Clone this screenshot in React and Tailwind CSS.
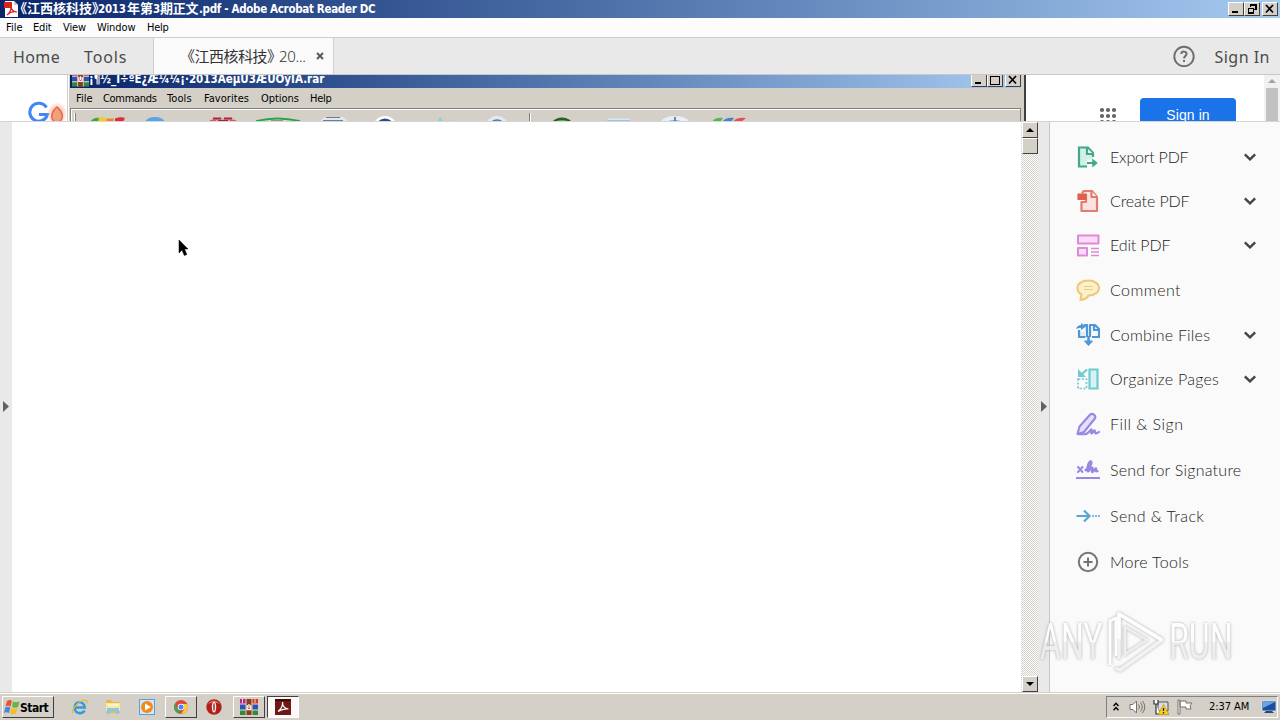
import React from "react";

const ui = "font-['DejaVu_Sans_Condensed','DejaVu_Sans','Noto_Sans_CJK_SC',sans-serif]";
const raised = "bg-[#d4d0c8] border border-t-white border-l-white border-r-[#404040] border-b-[#404040]";

function CaptionButton({ kind }) {
  return (
    <div className={`flex h-[14px] w-4 shrink-0 items-center justify-center ${raised}`}>
      <svg className="h-[10px] w-3" viewBox="0 0 12 10" fill="none" stroke="#000" shapeRendering="crispEdges">
        {kind === "min" && <path d="M2 8h6" strokeWidth="2" />}
        {kind === "max" && <path d="M1.500 1v8h9V1zM1 1.500h10" strokeWidth="1" />}
        {kind === "restore" && <path d="M4.500 3V.5h5.500v5H8M4 1h6M2 4.500h6M2.500 4v5h5V4" strokeWidth="1.400" />}
        {kind === "close" && <path d="M2 1l7 7.500M9 1L2 8.500" strokeWidth="1.700" shapeRendering="auto" />}
      </svg>
    </div>
  );
}

function BooksIcon({ className }) {
  return (
    <svg className={className} viewBox="0 0 18 16">
      <path fill="#b3268c" d="M0 0h6v5H0z" />
      <path fill="#d42b22" d="M6 0h6v5H6z" />
      <path fill="#d8342b" d="M12 0h6v5h-6z" />
      <path fill="#2b52b4" d="M0 5h18v6H0z" />
      <path fill="#2e8a3d" d="M0 11h18v5H0z" />
      <path fill="#e9dcc4" d="M0 4.600h18v1H0zM0 10.400h18v1H0zM2 0h1v4H2zM14.500 0h1v4h-1z" />
      <path fill="#8d3a21" d="M6 0h6v16H6z" />
      <path fill="#e8c7b0" d="M5.500 0h1v16h-1zM11.500 0h1v16h-1z" />
      <path stroke="#fff" strokeWidth="1.300" fill="none" d="M7.200 6v4.500h3.600V6M9 5v4" />
    </svg>
  );
}

function TitleBar() {
  return (
    <div className="flex h-[18px] shrink-0 items-center bg-linear-to-r from-[#0a246a] to-[#a6caf0] pr-[2px]">
      <svg className="ml-1 h-4 w-[14px] shrink-0" viewBox="0 0 14 16">
        <path fill="#fff" d="M1 0h9l4 4v12H1z" />
        <path fill="#c9c9c9" d="M10 0v4h4z" />
        <path fill="#d8251d" d="M0 1h8v6H0z" />
        <path d="M3 14c3-2 4-5 4-8 1 4 3 5 6 5-4-1-7 0-10 3z" fill="none" stroke="#d8251d" strokeWidth="1.200" />
      </svg>
      <div className={`flex h-[18px] items-center whitespace-pre font-bold leading-[18px] text-white ${ui}`}>
        <span className="-ml-[4px] w-[84px] text-[13px]">《江西核科技》</span>
        <span className="w-[29px] text-[11.500px] tracking-[-0.300px]">2013</span>
        <span className="w-[26px] text-[13px]">年第</span>
        <span className="w-[7px] text-[11.500px]">3</span>
        <span className="w-[38px] text-[13px] tracking-[-0.300px]">期正文</span>
        <span className="ml-[1px] text-[11.500px] tracking-[-0.320px]">.pdf - Adobe Acrobat Reader DC</span>
      </div>
      <div className="ml-auto flex">
        <CaptionButton kind="min" />
        <CaptionButton kind="restore" />
        <div className="w-[2px]" />
        <CaptionButton kind="close" />
      </div>
    </div>
  );
}

function MenuBar() {
  return (
    <div className={`flex h-5 shrink-0 items-center border-b border-[#cfcfcf] bg-[#fcfcfd] pt-[2px] text-[11px] text-black ${ui}`}>
      <span className="ml-[6px] w-[27px]">File</span>
      <span className="w-[30px] tracking-[-0.200px]">Edit</span>
      <span className="w-[34px] tracking-[-0.100px]">View</span>
      <span className="w-[50px] tracking-[-0.100px]">Window</span>
      <span className="tracking-[-0.300px]">Help</span>
    </div>
  );
}

function TabBar() {
  return (
    <div className="flex h-[37px] shrink-0 items-center border-b border-[#c8c8c8] bg-[#e9e9e9] font-['Noto_Sans','Noto_Sans_CJK_SC',sans-serif] text-[16px] text-[#4b4b4b]">
      <span className="ml-[13px] mt-[2px] w-[71px] tracking-[0.400px]">Home</span>
      <span className="mt-[2px] w-[69px] tracking-[0.850px]">Tools</span>
      <div className="flex h-full w-[181px] items-center border-x border-[#cfcfcf] bg-[#fafafa] text-[15px] text-[#333]">
        <span className="ml-[26px] mt-[1px] w-[101px] whitespace-nowrap font-['Noto_Sans_CJK_SC',sans-serif] tracking-[-0.500px]">《江西核科技》</span>
        <span className="-ml-[2px] mt-[1px] w-[28px] whitespace-nowrap font-light tracking-[-0.300px]">20...</span>
        <svg className="ml-[9px] h-2 w-2" viewBox="0 0 8 8" stroke="#5a5a5a" strokeWidth="2"><path d="M1 1l6 6M7 1L1 7" /></svg>
      </div>
      <svg className="ml-auto h-[22px] w-[22px]" viewBox="0 0 22 22" fill="none" stroke="#6e6e6e">
        <circle cx="11" cy="11.500" r="9.700" strokeWidth="1.900" />
        <path d="M8.300 9c.3-3.400 5.600-3 5.200.2-.2 1.700-2.400 2-2.500 4.200M11 15v2" strokeWidth="2" />
      </svg>
      <span className="ml-[19px] mr-[10px] mt-[2px] whitespace-nowrap tracking-[0.500px]">Sign In</span>
    </div>
  );
}

function ArchiveToolbarIcons() {
  return (
    <svg className="h-[12px] w-[945px]" viewBox="72 110 945 12">
      <path stroke="#fff" d="M75.500 113v9" /><path stroke="#808080" d="M76.500 113v9M530.500 113v9" />
      <path stroke="#fff" d="M531.500 113v9" />
      <path fill="#3eaa31" d="M91 122c2-3 5-5 10-4l-1 4z" /><path fill="#f4c82f" d="M100 117.500q5-1 8 1l-1 3.500h-8z" /><path fill="#ef8428" d="M108 118.500h7l-1 3.500h-7z" /><path fill="#e02c32" d="M116 118.500q6-2 10-.5l-2 4h-8z" />
      <ellipse cx="156" cy="122" rx="9.500" ry="5" fill="#58a5e8" />
      <path fill="#d7a6ac" d="M209 122l5-4h20l5 4z" /><path stroke="#b91f35" strokeWidth="1.800" d="M214 118.500h8m3 0h8M211 121.500h6m14 0h6" /><path fill="#86323e" d="M219 120h10v2h-10z" />
      <path fill="#d5dccb" stroke="#23a645" strokeWidth="2" d="M258 123v-2q20-5 42 0v2" /><path fill="#913c2d" d="M272 120.500h12v1.500h-12z" />
      <path fill="#e2e8ef" d="M320 122l6-5h18l6 5z" /><path stroke="#697f96" strokeWidth="1.200" d="M327 117.500h14M324 120.500h20" />
      <circle cx="386" cy="128.500" r="12.500" fill="#fff" /><circle cx="386" cy="128" r="9.500" fill="#2b4b8f" />
      <path fill="#8cd2d5" d="M438 122l3-5 4 5z" /><path fill="#e3b9b8" d="M449 122l3-2 5 2z" />
      <circle cx="498" cy="127.500" r="11.500" fill="#e3e9f3" /><circle cx="498" cy="128" r="8" fill="#a3bfe0" stroke="#5b77a5" strokeWidth="1.500" />
      <ellipse cx="563" cy="124" rx="10" ry="6.500" fill="#275e22" /><ellipse cx="563" cy="122" rx="6" ry="2" fill="#64bb44" />
      <path fill="#9fc1e8" d="M608 120h22l3 2h-24z" /><path fill="#dbe6f2" d="M609 118.500h22v1.500h-22z" />
      <ellipse cx="676" cy="124" rx="15" ry="8" fill="#e8eef7" /><path fill="#8ca9d2" d="M667 122q8-4 18 0z" /><path stroke="#47659b" strokeWidth="1.500" d="M676 117v5" />
      <path fill="#4dbb50" d="M713 122q3-5 11-4l-3 4z" /><path fill="#4a80cf" d="M723 122q4-5 12-4l-3 4z" /><path fill="#e64e52" d="M734 122q3-5 13-4l-5 4z" />
    </svg>
  );
}

function BackgroundWindows() {
  return (
    <div className="flex h-[47px] shrink-0 overflow-hidden border-b border-[#d5d5d5] bg-white">
      <div className="h-full w-[67px] shrink-0">
        <svg className="ml-7 mt-[26px] h-[21px] w-[39px]" viewBox="0 0 39 21" fill="none">
          <defs>
            <radialGradient id="flame"><stop offset="0" stopColor="#e85c43" stopOpacity=".9" /><stop offset="1" stopColor="#ffcab5" stopOpacity=".25" /></radialGradient>
          </defs>
          <path d="M18.500 6.500A9 9 0 1 0 19.500 13.500H11" stroke="#4285f4" strokeWidth="3" />
          <ellipse cx="29" cy="13" rx="9.500" ry="11" fill="url(#flame)" />
          <path d="M29 6c-6 5-7 12-2 15h4c6-4 3-11-2-15z" fill="#f2a07d" stroke="#e4684c" strokeWidth="1.500" />
        </svg>
      </div>
      <div className="flex h-full w-[959px] shrink-0 flex-col border-l border-r-2 border-l-[#d4d0c8] border-r-[#404040] bg-[#d4d0c8] pl-[2px] pr-[3px] shadow-[inset_1px_0_0_#fff]">
        <div className="flex h-[13px] shrink-0 items-start overflow-hidden bg-linear-to-r from-[#0a246a] to-[#a6caf0]">
          <BooksIcon className="-mt-[4px] ml-[2px] h-4 w-[17px] shrink-0" />
          <span className={`-mt-[4px] whitespace-nowrap text-[11.500px] font-bold leading-[16px] text-white ${ui}`}>¡¶½_Î÷ºË¿Æ¼¼¡·2013ÄêµÚ3ÆÚÕýÎÄ.rar</span>
          <div className="-mt-[2px] ml-auto flex">
            <CaptionButton kind="min" /><CaptionButton kind="max" /><div className="w-[2px]" /><CaptionButton kind="close" />
          </div>
        </div>
        <div className={`flex h-5 shrink-0 items-center pt-[2px] text-[11px] text-black ${ui}`}>
          <span className="ml-[6px] w-[27px]">File</span><span className="w-16 tracking-[-0.300px]">Commands</span>
          <span className="w-[37px] tracking-[0.100px]">Tools</span><span className="w-[57px] tracking-[0.050px]">Favorites</span>
          <span className="w-[49px] tracking-[-0.050px]">Options</span><span className="tracking-[-0.300px]">Help</span>
        </div>
        <div className="flex h-[14px] shrink-0 border-l border-r border-t border-[#808080] shadow-[inset_1px_1px_0_#fff]">
          <div className="mt-[1px] flex"><ArchiveToolbarIcons /></div>
        </div>
      </div>
      <div className="flex min-w-0 flex-1 font-['Liberation_Sans',Arial,sans-serif]">
        <svg className="ml-[73px] mt-[32px] h-4 w-[18px] shrink-0" viewBox="0 0 18 16" fill="#5f6368">
          <circle cx="3" cy="3" r="2.100" /><circle cx="9" cy="3" r="2.100" /><circle cx="15" cy="3" r="2.100" />
          <circle cx="3" cy="9" r="2.100" /><circle cx="9" cy="9" r="2.100" /><circle cx="15" cy="9" r="2.100" />
          <circle cx="3" cy="15" r="2.100" /><circle cx="9" cy="15" r="2.100" /><circle cx="15" cy="15" r="2.100" />
        </svg>
        <div className="ml-[23px] mt-[23px] h-9 w-24 shrink-0 rounded-[4px] bg-[#1a73e8] text-center text-[14px] leading-[34px] tracking-[0.100px] text-white">Sign in</div>
        <div className="ml-auto flex w-4 flex-col items-center bg-[#f1f1f1]">
          <svg className="h-[13px] w-4 shrink-0" viewBox="0 0 16 13"><path d="M4 8l4-4 4 4z" fill="#a3a3a3" /></svg>
          <div className="h-10 w-3 shrink-0 bg-[#c1c1c1]" />
        </div>
      </div>
    </div>
  );
}

const icons = {
  export: (
    <g stroke="#3fa98b" strokeWidth="2.200" fill="#d5eee6">
      <path d="M17 12V8l-5-5.500H3v19h8" /><path d="M11 3v6h6" fill="#fafafa" />
      <path d="M11 14.500h6v6h-6z" stroke="none" fill="#fafafa" />
      <path d="M11 18h7" strokeWidth="2" /><path d="M16.500 14l5 4-5 4z" fill="#3fa98b" strokeWidth=".5" />
    </g>
  ),
  create: (
    <g stroke="#e27c6e" strokeWidth="2.200" fill="#fbe3df" strokeLinejoin="round">
      <path d="M6 4.500L7.500 2H16l5 6v14H5.500v-9H10V5" /><path d="M15.500 2v6H21" fill="#fafafa" />
      <path d="M2 5h8v5.500H2z" fill="#e0604e" stroke="#e0604e" strokeWidth="1.200" />
    </g>
  ),
  edit: (
    <g stroke="#dd8ad4" strokeWidth="2" fill="#fbdcf8" strokeLinejoin="round">
      <path d="M2 2.500h20.500v8H2zM2 15h9v7.500H2z" /><path d="M15 15.500h8M15 19h8M15 22.500h8" strokeWidth="1.300" />
    </g>
  ),
  comment: (
    <g stroke="#f0c878" strokeWidth="2.200" fill="#fdf0cd" strokeLinejoin="round">
      <path d="M12.500 2.500c6 0 10.500 3 10.500 7.500S18.500 17.500 12.500 17.500c-1.500 3-4 4-8 4.500l1-5.500C3 15 1.500 13 1.500 10c0-4.500 4.500-7.500 11-7.500z" />
      <path d="M8 8.500h9M8 11.500h9" strokeWidth="1.200" />
    </g>
  ),
  combine: (
    <g stroke="#4d97d8" strokeWidth="2.200" fill="#dcedfb" strokeLinejoin="round">
      <path d="M9.500 14H3V7M8 2h3v12" /><path d="M14 14V2h5l4 4v8h-7" fill="#fafafa" /><path d="M18 2v5h5" fill="none" />
      <path d="M0 6c1-3 3-4 5-4V0l5 3.500L5 7V5C3 5 2 5 0 6z" stroke="none" fill="#4d97d8" />
      <path d="M5 9h4v4H5z" stroke="none" /><path d="M12.500 13v6" strokeWidth="2.600" /><path d="M8.500 18h8l-4 4.500z" fill="#4d97d8" strokeWidth="1" />
    </g>
  ),
  organize: (
    <g stroke="#6fcbd0" strokeWidth="2.200" fill="#d5f3f4">
      <path d="M13.500 2.500h8v19h-8z" /><path d="M2 12h8.500v9.500H2z" strokeDasharray="2.200 1.600" fill="none" strokeWidth="1.700" />
      <path d="M11 2.500L5 8" /><path d="M2 2v8h8z" fill="#6fcbd0" stroke="none" />
    </g>
  ),
  fill: (
    <g stroke="#9a86e4" strokeWidth="2.100" fill="#e6e0fb" strokeLinejoin="round" strokeLinecap="round">
      <path d="M1.500 22l2-7.500L14 2.800c2.500-2.500 7 1 4.500 4.200L8 20l-6.500 2z" />
      <path d="M2 22.200h7c4 0 5-5 6.500-4.800 1 .3-1.500 4 .2 4 1.500 0 1.600-3.500 3-3 1 .3-.4 3 1.300 3 1.300 0 2-.7 3-1.500" fill="none" />
    </g>
  ),
  signature: (
    <g stroke="#9a86e4" fill="none" strokeWidth="2" strokeLinecap="round">
      <path d="M2 9l4.500 5M6.500 9L2 14" /><path d="M9.500 12c4-2 7-7 5.500-8.500-2-1-4.500 7-3.500 9.500 1 2 3-3.500 4.500-3.500s-1 4.500.5 4.500c1.500-.2 2.500-4 3.500-3.500-.5 2-.5 3.500 1.500 2.500" strokeWidth="2.300" /><path d="M1 20h22" strokeLinecap="square" />
    </g>
  ),
  track: (
    <g stroke="#58a6d2" fill="none" strokeWidth="2.200">
      <path d="M.5 12H13M8 6.500l5.500 5.500L8 17.500" /><path d="M16 12h8" strokeDasharray="2 1" strokeWidth="1.600" />
    </g>
  ),
  more: (
    <g stroke="#757575" fill="none" strokeWidth="2">
      <circle cx="12" cy="12" r="9.200" /><path d="M12 7.500v9M7.500 12h9" />
    </g>
  ),
};

const tools = [
  ["export", "Export PDF", true, "h-11", "tracking-[-0.200px]"],
  ["create", "Create PDF", true, "h-11", "tracking-[-0.100px]"],
  ["edit", "Edit PDF", true, "h-11", "tracking-[-0.150px]"],
  ["comment", "Comment", false, "h-[46px]", "tracking-[0.450px]"],
  ["combine", "Combine Files", true, "h-11", "tracking-[0.200px]"],
  ["organize", "Organize Pages", true, "h-11", "tracking-[0.250px]"],
  ["fill", "Fill & Sign", false, "h-[46px]", "tracking-[0.450px]"],
  ["signature", "Send for Signature", false, "h-[46px]", "tracking-[0.250px]"],
  ["track", "Send & Track", false, "h-[46px]", "tracking-[0.400px]"],
  ["more", "More Tools", false, "h-[46px]", "tracking-[0.300px]"],
];

function ToolsPanel() {
  return (
    <div className="flex-1 border-l border-[#c6c6c6] bg-[#fafafa] pt-[13px] font-[Lato,sans-serif] text-[16px] font-light text-[#222]">
      {tools.map(([icon, label, more, height, tracking]) => (
        <div key={label} className={`flex items-center pl-[26px] pr-6 ${height}`}>
          <svg className="h-6 w-6 shrink-0" viewBox="0 0 24 24">{icons[icon]}</svg>
          <span className={`ml-[10px] whitespace-nowrap ${tracking}`}>{label}</span>
          {more && (
            <svg className="ml-auto h-2 w-3 shrink-0" viewBox="0 0 12 8" fill="none" stroke="#454545" strokeWidth="2.500"><path d="M.8 1.300L6 6.300l5.200-5" /></svg>
          )}
        </div>
      ))}
    </div>
  );
}

function ScrollButton({ down }) {
  return (
    <div className={`flex h-4 w-4 shrink-0 items-center justify-center ${raised}`}>
      <svg className="h-1 w-2" viewBox="0 0 8 4"><path d={down ? "M0 0h8L4 4z" : "M0 4h8L4 0z"} /></svg>
    </div>
  );
}

function Workspace() {
  return (
    <div className="flex h-[570px] shrink-0">
      <div className="flex w-3 shrink-0 items-center bg-[#e9e9e9] pb-[2px] pl-[3px]">
        <svg className="h-[11px] w-[6px]" viewBox="0 0 6 11"><path d="M0 0l6 5.500L0 11z" fill="#616161" /></svg>
      </div>
      <div className="w-[1009px] shrink-0 bg-white" />
      <div className="flex w-[17px] shrink-0 flex-col items-end bg-[conic-gradient(#d4d0c8_25%,#fff_0_50%,#d4d0c8_0_75%,#fff_0)] bg-[length:2px_2px]">
        <ScrollButton />
        <div className={`h-4 w-4 shrink-0 ${raised}`} />
        <div className="flex-1" />
        <ScrollButton down />
      </div>
      <div className="flex w-[11px] shrink-0 items-center bg-[#e9e9e9] pb-[2px] pl-[3px]">
        <svg className="h-[11px] w-[6px]" viewBox="0 0 6 11"><path d="M0 0l6 5.500L0 11z" fill="#616161" /></svg>
      </div>
      <ToolsPanel />
    </div>
  );
}

function Taskbar() {
  return (
    <div className="flex h-7 shrink-0 items-center border-t border-[#d4d0c8] bg-[#d4d0c8] pt-[1px] shadow-[inset_0_1px_0_#fff]">
      <div className={`ml-[2px] flex h-[22px] w-[52px] shrink-0 items-center ${raised}`}>
        <svg className="ml-[1px] h-4 w-[17px] shrink-0" viewBox="0 0 17 16">
          <path fill="#e8572b" d="M3 2c2-1.500 4-1 5 0L6.500 7.500C5 6.500 3 6.500 1.500 7.500z" />
          <path fill="#69b343" d="M9 2.500c2 1 4 1 6.500 0L14 8c-2 1-4 1-6 0z" />
          <path fill="#4388d9" d="M1.300 8.500c2-1 3.500-1 5 0L5 14c-1.500-1-3.500-1-5 0z" />
          <path fill="#f5bd26" d="M7.300 9c2 1 4 1 6.200 0L12 14.500c-2 1-4 1-6 0z" />
        </svg>
        <span className={`-ml-[1px] mt-[1px] text-[12px] font-bold tracking-[-0.500px] text-black ${ui}`}>Start</span>
      </div>
      <svg className="ml-[17px] h-4 w-[17px] shrink-0" viewBox="0 0 17 16" fill="none">
        <path d="M13.500 11.500c-2 4-9.500 3.500-9.800-2.500C3.500 1.500 13 1 13.700 8.600H5" stroke="#3499dd" strokeWidth="2.500" />
        <path d="M2 14C-1 11 10-.5 15.500 1.500c1 .5.500 2 0 3" stroke="#e7b83c" strokeWidth="1.300" />
      </svg>
      <svg className="ml-[17px] h-4 w-4 shrink-0" viewBox="0 0 16 16">
        <path fill="#e4b94f" d="M1 1h5l1 2h8v11H1z" /><path fill="#fbe79e" d="M1 4h14v8H1z" />
        <path fill="#85c8e8" d="M2 9h12v6h-3v-3H5v3H2z" /><path fill="#fff7cc" d="M3 5h10v2H3z" />
      </svg>
      <svg className="ml-[18px] h-4 w-4 shrink-0" viewBox="0 0 16 16">
        <path fill="#5aa0dc" d="M0 0h16v16H0z" /><path fill="#d3e7f7" d="M1 1h14v14H1z" /><circle cx="8" cy="8" r="6" fill="#f08a1d" /><path fill="#fff" d="M6 4.500l6 3.500-6 3.500z" />
      </svg>
      <div className={`ml-[10px] flex h-[22px] w-8 shrink-0 items-center justify-center ${raised}`}>
        <svg className="h-[14px] w-[14px]" viewBox="0 0 14 14">
          <circle cx="7" cy="7" r="7" fill="#e0473a" /><path fill="#41a55a" d="M.8 3.700L5 11l2 3A7 7 0 0 1 .8 3.700z" /><path fill="#f7cb3b" d="M13.300 4H7.500l2.800 5L7 14a7 7 0 0 0 6.300-10z" />
          <circle cx="7" cy="7" r="3.300" fill="#fff" /><circle cx="7" cy="7" r="2.500" fill="#4488ee" />
        </svg>
      </div>
      <svg className="ml-[9px] h-4 w-4 shrink-0" viewBox="0 0 16 16">
        <circle cx="8" cy="8" r="7.700" fill="#b3201a" /><path d="M2 5a7 7 0 0 1 12 0q-6-3-12 0z" fill="#df655b" /><ellipse cx="8" cy="8" rx="2.200" ry="5.500" fill="#f7eeee" /><ellipse cx="8" cy="8" rx=".8" ry="4" fill="#96332c" />
      </svg>
      <div className={`ml-[11px] flex h-[22px] w-8 shrink-0 items-center justify-center ${raised}`}><BooksIcon className="h-4 w-[18px]" /></div>
      <div className="ml-[2px] flex h-[22px] w-8 shrink-0 items-center justify-center border border-b-white border-l-[#404040] border-r-white border-t-[#404040] bg-[#fbfaf9]">
        <svg className="h-4 w-4" viewBox="0 0 16 16"><path fill="#6e1715" d="M0 0h16v16H0z" /><path fill="#3b0b0b" d="M0 0h16v2H0z" /><path d="M3 12.500C6 10 8 6 7.500 3c0 4 2 6.500 6 7-4-.8-7 .3-10.500 2.500z" fill="none" stroke="#fff" strokeWidth="1.200" /></svg>
      </div>
      <div className="ml-auto mr-[2px] flex h-[22px] w-[172px] shrink-0 items-center border border-b-white border-l-[#808080] border-r-white border-t-[#808080]">
        <svg className="ml-[6px] mb-[2px] h-[9px] w-[6px] shrink-0" viewBox="0 0 6 9" fill="none" stroke="#000" strokeWidth="1.400"><path d="M.5 4L3 1.200 5.500 4M.5 8.300L3 5.500l2.500 2.800" /></svg>
        <svg className="ml-[10px] h-4 w-[17px] shrink-0" viewBox="0 0 17 16" fill="none" stroke="#77736c"><path d="M1 5.500h3L7.500 2v12L4 10.500H1z" fill="#fff" /><path d="M9.500 5.500q2 2.500 0 5M11.500 3.500q3.500 4.500 0 9M13.500 2q4.500 6 0 12" /></svg>
        <svg className="ml-[7px] h-4 w-4 shrink-0" viewBox="0 0 16 16"><path d="M5 3h10v9H5z" fill="#d8dde2" stroke="#555" /><path d="M1 1v4h4V1M3 5v10h4" fill="#fff" stroke="#333" strokeWidth="1.200" /><path d="M10.500 5.500l5.500 10H5z" fill="#f9cf21" stroke="#ad8500" strokeWidth=".6" /><path d="M10.500 9v3M10.500 13v1.500" stroke="#222" strokeWidth="1.300" /></svg>
        <svg className="ml-[8px] h-4 w-4 shrink-0" viewBox="0 0 16 16" fill="#fff" stroke="#77736c"><path d="M1 1h2v14H1zM3 2h6v2h6l-2 3 1 3H9V8H3z" /></svg>
        <span className={`ml-[16px] mt-[1px] w-[60px] whitespace-nowrap text-[11px] tracking-[-0.050px] text-black ${ui}`}>2:37 AM</span>
        <svg className="-ml-[2px] h-[14px] w-4 shrink-0" viewBox="0 0 16 14"><path fill="#1c4fa0" stroke="#e7edf5" strokeWidth=".8" d="M1 1h14v10H1z" /><path fill="#62a8ec" d="M2 2h12L2 8z" /><path fill="#31465f" d="M5 11h6l2 2H3z" /></svg>
      </div>
    </div>
  );
}

function Watermark() {
  const word = "inline-block origin-left bg-linear-to-b from-white from-50% to-[#ececec] to-50% bg-clip-text text-[50px] leading-[60px] text-transparent";
  return (
    <div className="pointer-events-none absolute left-[1040px] top-[610px] flex h-[64px] w-[194px] items-center font-[Roboto,sans-serif] opacity-80 drop-shadow-[0_0_1.500px_#999]">
      <div className="w-[66px]"><span className={`${word} scale-x-[0.640]`}>ANY</span></div>
      <svg className="h-[62px] w-[58px] shrink-0" viewBox="0 0 58 62" fill="none" strokeLinejoin="round">
        <path d="M4 54V10l6-3v38" stroke="#fff" strokeWidth="3" />
        <path d="M13 48V3l43 26-42 30-5-2" stroke="#f1f1f1" strokeWidth="3.500" />
        <path d="M13 28V3l43 26" stroke="#fff" strokeWidth="3.500" />
        <path d="M19 45V16l22 13-22 14" stroke="#ededed" strokeWidth="2.500" />
      </svg>
      <div className="ml-[5px] w-[66px]"><span className={`${word} scale-x-[0.645]`}>RUN</span></div>
    </div>
  );
}

export default function App() {
  return (
    <div className="relative flex h-[720px] w-[1280px] flex-col overflow-hidden bg-white">
      <TitleBar />
      <MenuBar />
      <TabBar />
      <BackgroundWindows />
      <Workspace />
      <Taskbar />
      <Watermark />
      <svg className="absolute left-[178px] top-[239px] h-[18px] w-[11px]" viewBox="0 0 11 18"><path d="M1 1v13l3-3 2.300 5.500 2.500-1L6.500 10H10z" fill="#000" stroke="#000" strokeWidth=".5" /></svg>
    </div>
  );
}
